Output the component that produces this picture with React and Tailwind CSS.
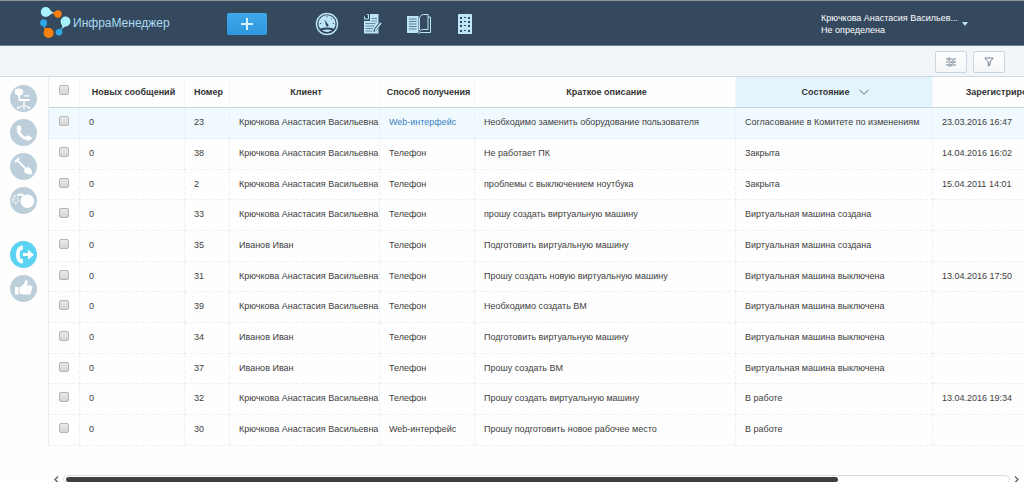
import { useState } from "react";

const columns = [
  { key: "messages", title: "Новых сообщений", width: "w-[105px]" },
  { key: "number", title: "Номер", width: "w-[45px]" },
  { key: "client", title: "Клиент", width: "w-[150px]" },
  { key: "source", title: "Способ получения", width: "w-[95px]" },
  { key: "summary", title: "Краткое описание", width: "w-[261px]" },
  { key: "state", title: "Состояние", width: "w-[197px]", sorted: true },
  { key: "registered", title: "Зарегистрирована", width: "w-[146px]" },
];

const KRYUCHKOVA = "Крючкова Анастасия Васильевна";
const IVANOV = "Иванов Иван";

const calls = [
  { number: 23, client: KRYUCHKOVA, source: "Web-интерфейс", link: true, summary: "Необходимо заменить оборудование пользователя", state: "Согласование в Комитете по изменениям", registered: "23.03.2016 16:47" },
  { number: 38, client: KRYUCHKOVA, source: "Телефон", summary: "Не работает ПК", state: "Закрыта", registered: "14.04.2016 16:02" },
  { number: 2, client: KRYUCHKOVA, source: "Телефон", summary: "проблемы с выключением ноутбука", state: "Закрыта", registered: "15.04.2011 14:01" },
  { number: 33, client: KRYUCHKOVA, source: "Телефон", summary: "прошу создать виртуальную машину", state: "Виртуальная машина создана" },
  { number: 35, client: IVANOV, source: "Телефон", summary: "Подготовить виртуальную машину", state: "Виртуальная машина создана" },
  { number: 31, client: KRYUCHKOVA, source: "Телефон", summary: "Прошу создать новую виртуальную машину", state: "Виртуальная машина выключена", registered: "13.04.2016 17:50" },
  { number: 39, client: KRYUCHKOVA, source: "Телефон", summary: "Необходимо создать ВМ", state: "Виртуальная машина выключена" },
  { number: 34, client: IVANOV, source: "Телефон", summary: "Подготовить виртуальную машину", state: "Виртуальная машина выключена" },
  { number: 37, client: IVANOV, source: "Телефон", summary: "Прошу создать ВМ", state: "Виртуальная машина выключена" },
  { number: 32, client: KRYUCHKOVA, source: "Телефон", summary: "Прошу создать виртуальную машину", state: "В работе", registered: "13.04.2016 19:34" },
  { number: 30, client: KRYUCHKOVA, source: "Web-интерфейс", summary: "Прошу подготовить новое рабочее место", state: "В работе" },
];

function Logo() {
  return (
    <svg width="32" height="32" viewBox="0 0 32 32" aria-hidden="true">
      <g fill="#a9f0fd">
        <circle cx="5.700" cy="5" r="4.900" />
        <path d="M8.500 1Q10.500 4.500 14 5.800 10.500 7 8 9.300z" />
        <circle cx="25.500" cy="14.500" r="4.900" />
        <path d="M20.900 16Q23 18.500 22 22 24 19.300 28.500 18.300z" />
      </g>
      <g fill="#f97f0e">
        <circle cx="18" cy="7" r="3.700" />
        <path d="M17 3.700Q15.500 5.500 12 6.100 15 7.800 16.500 10.200z" />
        <circle cx="8.600" cy="26" r="5" />
        <path d="M3.800 27Q5.200 23 3.900 20 6.500 21.800 10.500 21.400z" />
      </g>
      <g fill="#2fa7e6">
        <circle cx="3.600" cy="15.800" r="3.500" />
        <path d="M.8 18Q4 19 4.300 22 5 19.500 7 16.800z" />
        <circle cx="19" cy="25.200" r="3.300" />
        <path d="M16.800 23Q21 22.500 22.500 19.500 21.500 22.800 22.200 25.500z" />
      </g>
    </svg>
  );
}

function GaugeIcon() {
  return (
    <svg width="24" height="24" viewBox="0 0 24 24" fill="none">
      <circle cx="12" cy="12" r="10.500" stroke="#bce6f7" strokeWidth="1.400" />
      <path d="M5 16.500a8.500 8.500 0 1 1 14 0q-7-2-14 0z" fill="#bce6f7" />
      <path d="M7 18.300q5-1.500 10 0-5 3.500-10 0z" fill="#bce6f7" />
      <path d="M9.500 7.500l3.500 4.700a1.300 1.300 0 1 1-2 1.200z" fill="#34495e" />
      <path d="M12 4v1.500M5 11.500h1.300M17.700 11.500H19M16.800 6.500l-.9.9" stroke="#34495e" strokeWidth=".8" />
    </svg>
  );
}

function NoteIcon() {
  return (
    <svg width="20" height="22" viewBox="0 0 20 22" fill="none">
      <path d="M7 1h8.500v9.500L11 16l-.7 3 3-1.200 2.200-2.800v5.500H1V8h6z" fill="#bce6f7" />
      <path d="M1.500 6V3.500M1 6h4.500V1.500H4" stroke="#bce6f7" />
      <path d="M2.500 10.500h10M2.500 13h9M2.500 15.500H10M2.500 18h6.500M8.500 5.500H14M8.500 8H14" stroke="#34495e" strokeWidth=".6" />
      <path d="M18 10l-6 7.500" stroke="#bce6f7" strokeWidth="1.500" />
    </svg>
  );
}

function BookIcon() {
  return (
    <svg width="26" height="22" viewBox="0 0 26 22" fill="none">
      <path d="M1 3h11.500v16H1z" fill="#bce6f7" />
      <path d="M3 6h7.500M3 8.500h7.500M3 11h7.500M3 13.500h7.500M3 16h7.500" stroke="#34495e" strokeWidth=".7" />
      <path d="M1 19.500h10.500q1.500 1.500 3 0H24.500V4H22" stroke="#bce6f7" />
      <path d="M13.500 17V4.500q1.500-3 4-3H22v15h-5.500q-2 0-3 2" stroke="#bce6f7" />
    </svg>
  );
}

function GridIcon() {
  return (
    <svg width="16" height="22" viewBox="0 0 16 22">
      <path d="M1 2q0-1 1-1h12q1 0 1 1v19H1z" fill="#bce6f7" />
      <g fill="#34495e">
        {[4, 8, 12, 17].map((y) => (
          <g key={y}>
            <rect x="3" y={y} width="2" height="2" />
            <rect x="7" y={y} width="2" height="1" />
            <rect x="11" y={y} width="2" height="2" />
          </g>
        ))}
      </g>
    </svg>
  );
}

const sections = [
  {
    label: "Рабочее место",
    art: (
      <>
        <ellipse cx="9" cy="7" rx="4.300" ry="3.400" fill="#fff" />
        <path d="M9 10l.5 5h10.200" stroke="#fff" strokeWidth="1.800" />
        <path d="M14 10.800h5.500M14 15.500v6" stroke="#fff" strokeWidth="1.300" />
        <path d="M7.500 22.500l6.500-1.700 5.500 1.700" stroke="#fff" strokeWidth="1.200" />
        <circle cx="8" cy="23" r="1.100" fill="#fff" />
        <circle cx="14" cy="23.500" r="1.100" fill="#fff" />
        <circle cx="19" cy="23" r="1.100" fill="#fff" />
      </>
    ),
  },
  {
    label: "Звонки",
    art: <path d="M7 7.500q2-2 3.500-.5l1 3q.3 1.200-1.500 2.500 1.800 3.500 5.500 5.300 1.500-1.700 2.700-1.300l3.500 1.700q1 1.300-1.200 2.800-3 1.500-7.500-1.300Q5 14.500 7 7.500z" fill="#fff" />,
  },
  {
    label: "Работы",
    art: (
      <>
        <path d="M5.500 8.500l3.200-3M7.200 7.200l8.800 8.800" stroke="#fff" strokeWidth="2" strokeLinecap="round" />
        <path d="M13.500 18l4.300-4.300q4.700 2 4.200 7.300-5.500 1.500-8.500-3z" fill="#fff" />
      </>
    ),
  },
  {
    label: "Проблемы",
    art: (
      <>
        <circle cx="17.300" cy="14.300" r="6.800" fill="#fff" />
        <path d="M14 9.500l-2-1.800q-2-.5-5 .8" stroke="#fff" strokeWidth="2" />
        <path d="M2 11.500l2.500.7M4 8.500l1.500 1.500M2 14.500l2.500-.5M5.500 17l.7-2M8.500 14.500L8 13M8.500 11.500l-1.300.5" stroke="#fff" strokeWidth="1.200" />
      </>
    ),
  },
  {
    label: "Исходящие",
    active: true,
    art: (
      <>
        <path d="M11.500 4.500Q6 6 6 13.500t5.500 9l1.500-.5v-3.500l-2.500-1q-1.500-4 0-8l2.500-1V5z" fill="#fff" />
        <path d="M13 12h5V8.800l6 4.900-6 4.800V15h-5z" fill="#fff" />
      </>
    ),
  },
  {
    label: "Согласования",
    art: (
      <>
        <path d="M5 12h3.500v7.500H5z" fill="#fff" />
        <path d="M9.500 12.500l4.500-3.500 1.500-4q2.500 0 2.300 3l-1 2.500H21q2 1 1 3l-1 4.500q-.5 1.500-2 1.500h-6L9.500 18.500z" fill="#fff" />
      </>
    ),
  },
];

function Tick({ label, checked, onChange }) {
  return (
    <input
      type="checkbox"
      aria-label={label}
      checked={checked}
      onChange={onChange}
      className="block appearance-none w-[10px] h-[10px] mx-auto mb-1 rounded-[2px] border border-[#b4b4b4] bg-linear-to-b from-[#e8e8e8] to-[#d6d6d6] checked:from-[#5b9bd5] checked:to-[#5b9bd5]"
    />
  );
}

function ToolButton({ label, children }) {
  return (
    <button
      aria-label={label}
      className="flex items-center justify-center w-8 h-[22px] rounded-[2px] border border-[#c9d5de] bg-linear-to-b from-white to-[#f4f6f8]"
    >
      {children}
    </button>
  );
}

function Header() {
  const navItem = "flex items-center justify-center w-[26px]";
  return (
    <header className="flex items-center h-[46px] pt-[2px] bg-[#34495e] border-t border-t-[#8c9196] border-b border-b-[#71808e]">
      <a href="#" className="flex items-center gap-px w-[187px] ml-10 pb-[2px] text-xs text-[#a9dcf3]">
        <Logo />
        ИнфраМенеджер
      </a>
      <button
        aria-label="Создать"
        className="flex items-center justify-center w-10 h-[22px] rounded-[2px] bg-linear-to-b from-[#3fa8ea] to-[#2f97dd]"
      >
        <svg width="12" height="12" viewBox="0 0 12 12" stroke="#d8f2fd" strokeWidth="2">
          <path d="M6 0v12M0 6h12" />
        </svg>
      </button>
      <nav className="flex gap-5 ml-[47px]">
        <a href="#" aria-label="Панель" className={navItem}><GaugeIcon /></a>
        <a href="#" aria-label="Заявки" className={navItem}><NoteIcon /></a>
        <a href="#" aria-label="База знаний" className={navItem}><BookIcon /></a>
        <a href="#" aria-label="Активы" className={navItem}><GridIcon /></a>
      </nav>
      <button className="flex items-center gap-1 ml-auto mr-14 text-left text-[9px] leading-3 text-white">
        <span>
          <span className="block">Крючкова Анастасия Васильев...</span>
          <span className="block">Не определена</span>
        </span>
        <svg width="6" height="4" viewBox="0 0 6 4" fill="#bce6f7">
          <path d="M0 0h6L3 4z" />
        </svg>
      </button>
    </header>
  );
}

function CallsTable() {
  const [selected, setSelected] = useState([]);

  function toggle(number) {
    setSelected((s) =>
      s.includes(number) ? s.filter((n) => n !== number) : [...s, number],
    );
  }

  function toggleAll() {
    setSelected((s) => (s.length === calls.length ? [] : calls.map((c) => c.number)));
  }

  const border = "border-r border-b border-dashed border-[#eceff1]";
  const cell = `${border} pt-0 pb-[2px] pl-[9px] pr-0`;
  const headBorder = "border-r border-r-[#f3f6f8] border-b border-b-[#c5d5e2]";

  return (
    <table className="table-fixed w-max border-separate border-spacing-0 border-l border-[#e6ecf0] text-[9px] leading-3 text-[#404040] whitespace-nowrap">
      <thead>
        <tr className="h-[31px] text-[#333]">
          <th className={`${headBorder} w-[31px] p-0`}>
            <Tick
              label="Выбрать все"
              checked={selected.length === calls.length}
              onChange={toggleAll}
            />
          </th>
          {columns.map((c) => (
            <th
              key={c.key}
              className={`${headBorder} ${c.width} py-0 pl-[6px] pr-[3px] font-bold ${c.sorted ? "bg-[#e3f4fd]" : ""}`}
            >
              <span className="inline-flex items-center gap-[10px]">
                {c.title}
                {c.sorted && (
                  <svg width="10" height="6" viewBox="0 0 10 6" fill="none" stroke="#5b6b7a">
                    <path d="M.5 1L5 5l4.500-4" />
                  </svg>
                )}
              </span>
            </th>
          ))}
        </tr>
      </thead>
      <tbody>
        {calls.map((call) => (
          <tr key={call.number} className="h-[31px] nth-[3n]:h-[30px] first:bg-[#f0f9fd]">
            <td className={`${border} p-0`}>
              <Tick
                label={`Заявка ${call.number}`}
                checked={selected.includes(call.number)}
                onChange={() => toggle(call.number)}
              />
            </td>
            <td className={cell}>0</td>
            <td className={cell}>{call.number}</td>
            <td className={cell}>{call.client}</td>
            <td className={cell}>
              {call.link ? (
                <a href="#" className="text-[#3a7fc4]">{call.source}</a>
              ) : (
                call.source
              )}
            </td>
            <td className={cell}>{call.summary}</td>
            <td className={cell}>{call.state}</td>
            <td className={cell}>{call.registered}</td>
          </tr>
        ))}
      </tbody>
    </table>
  );
}

function ScrollBar() {
  return (
    <div className="flex items-center gap-1 pl-[6px] pr-[5px] mt-[29px]">
      <button aria-label="Влево">
        <svg width="5" height="7" viewBox="0 0 5 7" fill="none" stroke="#666" strokeWidth="1.400">
          <path d="M4 .5l-3 3 3 3" />
        </svg>
      </button>
      <div className="flex items-center flex-1 h-[9px] px-[2px] rounded-full border border-[#dcdcdc]">
        <div className="w-[82%] h-[5px] rounded-full bg-[#404040]" />
      </div>
      <button aria-label="Вправо">
        <svg width="5" height="7" viewBox="0 0 5 7" fill="none" stroke="#666" strokeWidth="1.400">
          <path d="M1 .5l3 3-3 3" />
        </svg>
      </button>
    </div>
  );
}

export default function App() {
  return (
    <div className="h-screen overflow-hidden flex flex-col bg-[#fefefe] font-['Liberation_Sans',Arial,sans-serif]">
      <Header />
      <div className="flex items-center justify-end gap-[6px] h-[31px] pt-[2px] pr-[19px] bg-[#f2f6f9] border-b border-[#cbdae5]">
        <ToolButton label="Настройка колонок">
          <svg width="10" height="10" viewBox="0 0 10 10" fill="#fff" stroke="#7b8b9b">
            <path d="M0 2h10M0 5h10M0 8h10" />
            <circle cx="3" cy="2" r="1.200" />
            <circle cx="7" cy="5" r="1.200" />
            <circle cx="4" cy="8" r="1.200" />
          </svg>
        </ToolButton>
        <ToolButton label="Фильтр">
          <svg width="10" height="10" viewBox="0 0 10 10" fill="none" stroke="#6f8091">
            <path d="M.8 1h8.400L6 5v3L4.300 9V5z" />
          </svg>
        </ToolButton>
      </div>
      <div className="flex flex-1 min-h-0">
        <nav className="flex flex-col gap-[7px] w-12 shrink-0 items-center pt-2 pr-px">
          {sections.map((s) => (
            <a key={s.label} href="#" aria-label={s.label} className={s.active ? "mt-5" : ""}>
              <svg width="27" height="27" viewBox="0 0 27 27" fill="none">
                <circle cx="13.500" cy="13.500" r="13.500" fill={s.active ? "#5dd3f3" : "#bccfda"} />
                {s.art}
              </svg>
            </a>
          ))}
        </nav>
        <main className="flex-1 min-w-0 overflow-hidden">
          <CallsTable />
          <ScrollBar />
        </main>
      </div>
    </div>
  );
}
